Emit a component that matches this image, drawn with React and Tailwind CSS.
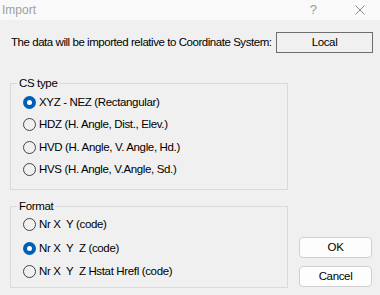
const font = { fontFamily: '"Liberation Sans", Arial, sans-serif' };

const Radio = ({ checked, label, tall }) => (
  <div className={`flex items-center pl-[12px] ${tall ? "h-[23.5px]" : "h-[22.5px]"}`}>
    {checked ? (
      <span className="w-[13px] h-[13px] rounded-full bg-[#005fb8] flex items-center justify-center shrink-0">
        <span className="w-[5px] h-[5px] rounded-full bg-white" />
      </span>
    ) : (
      <span className="w-[13px] h-[13px] rounded-full border border-[#444] shrink-0" />
    )}
    <span className="ml-[3px] text-[11.5px] tracking-[-0.35px] text-black whitespace-pre">{label}</span>
  </div>
);

const Group = ({ title, className, children }) => (
  <div className={`relative border border-[#dadada] ${className}`}>
    <span className="absolute -top-[8px] left-[6px] px-[2px] bg-[#f0f0f0] text-[11.5px] tracking-[-0.35px] leading-[14px] text-black">
      {title}
    </span>
    {children}
  </div>
);

const App = () => {
  return (
    <div className="w-[380px] h-[295px] bg-[#f0f0f0] flex flex-col overflow-hidden" style={font}>
      <div className="h-[20px] shrink-0 bg-[#f9f9f9] flex items-center pl-[2px] pr-[15px]">
        <span className="text-[12px] text-[#a0a0a0] flex-1">Import</span>
        <span className="text-[13px] text-[#9a9a9a] mr-[38px]">?</span>
        <svg width="10" height="10" viewBox="0 0 10 10">
          <path d="M0.5 0.5 L9.5 9.5 M9.5 0.5 L0.5 9.5" stroke="#8a8a8a" strokeWidth="1" />
        </svg>
      </div>

      <div className="flex items-center mt-[12px] pl-[11px] shrink-0">
        <span className="text-[11.5px] tracking-[-0.45px] text-black w-[265px] whitespace-nowrap">
          The data will be imported relative to Coordinate System:
        </span>
        <div className="w-[97px] h-[21px] border border-[#6d6d6d] flex items-center justify-center text-[11.5px] tracking-[-0.35px] text-black">
          Local
        </div>
      </div>

      <div className="flex mt-[30px] pl-[10px] shrink-0">
        <div className="flex flex-col">
          <Group title="CS type" className="w-[278px] h-[107px] pt-[7px]">
            <Radio checked label="XYZ - NEZ (Rectangular)" />
            <Radio label="HDZ (H. Angle, Dist., Elev.)" />
            <Radio label="HVD (H. Angle, V. Angle, Hd.)" />
            <Radio label="HVS (H. Angle, V.Angle, Sd.)" />
          </Group>
          <Group title="Format" className="w-[278px] h-[82px] mt-[16px] pt-[6px]">
            <Radio tall label="Nr X  Y (code)" />
            <Radio tall checked label="Nr X  Y  Z (code)" />
            <Radio tall label="Nr X  Y  Z Hstat Hrefl (code)" />
          </Group>
        </div>
        <div className="flex flex-col justify-end ml-[11px] gap-[8px] pb-[1px]">
          <button className="w-[73px] h-[21px] rounded-[4px] border border-[#d0d0d0] bg-[#fdfdfd] text-[11.5px] tracking-[-0.35px] text-black">
            OK
          </button>
          <button className="w-[73px] h-[21px] rounded-[4px] border border-[#d0d0d0] bg-[#fdfdfd] text-[11.5px] tracking-[-0.35px] text-black">
            Cancel
          </button>
        </div>
      </div>
    </div>
  );
};

export default App;
